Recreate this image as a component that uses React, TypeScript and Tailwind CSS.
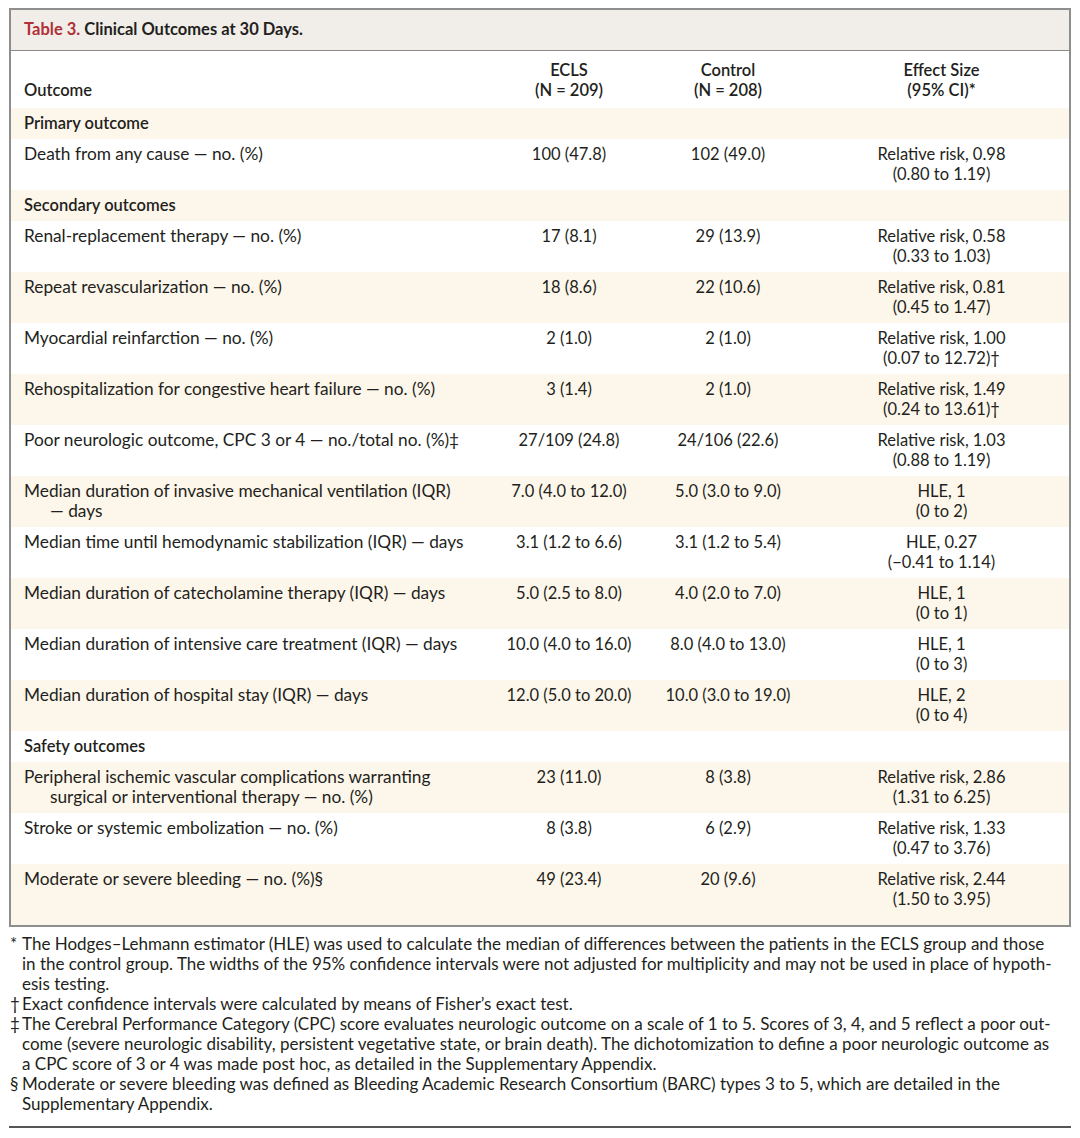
import React from "react";

type Row =
  | { kind: "section"; label: string; shade: boolean }
  | {
      kind: "data";
      label: string[];
      ecls: string;
      control: string;
      effect: string[];
      shade: boolean;
      last?: boolean;
    };

const rows: Row[] = [
  { kind: "section", label: "Primary outcome", shade: true },
  {
    kind: "data",
    label: ["Death from any cause — no. (%)"],
    ecls: "100 (47.8)",
    control: "102 (49.0)",
    effect: ["Relative risk, 0.98", "(0.80 to 1.19)"],
    shade: false,
  },
  { kind: "section", label: "Secondary outcomes", shade: true },
  {
    kind: "data",
    label: ["Renal-replacement therapy — no. (%)"],
    ecls: "17 (8.1)",
    control: "29 (13.9)",
    effect: ["Relative risk, 0.58", "(0.33 to 1.03)"],
    shade: false,
  },
  {
    kind: "data",
    label: ["Repeat revascularization — no. (%)"],
    ecls: "18 (8.6)",
    control: "22 (10.6)",
    effect: ["Relative risk, 0.81", "(0.45 to 1.47)"],
    shade: true,
  },
  {
    kind: "data",
    label: ["Myocardial reinfarction — no. (%)"],
    ecls: "2 (1.0)",
    control: "2 (1.0)",
    effect: ["Relative risk, 1.00", "(0.07 to 12.72)†"],
    shade: false,
  },
  {
    kind: "data",
    label: ["Rehospitalization for congestive heart failure — no. (%)"],
    ecls: "3 (1.4)",
    control: "2 (1.0)",
    effect: ["Relative risk, 1.49", "(0.24 to 13.61)†"],
    shade: true,
  },
  {
    kind: "data",
    label: ["Poor neurologic outcome, CPC 3 or 4 — no./total no. (%)‡"],
    ecls: "27/109 (24.8)",
    control: "24/106 (22.6)",
    effect: ["Relative risk, 1.03", "(0.88 to 1.19)"],
    shade: false,
  },
  {
    kind: "data",
    label: ["Median duration of invasive mechanical ventilation (IQR)", "— days"],
    ecls: "7.0 (4.0 to 12.0)",
    control: "5.0 (3.0 to 9.0)",
    effect: ["HLE, 1", "(0 to 2)"],
    shade: true,
  },
  {
    kind: "data",
    label: ["Median time until hemodynamic stabilization (IQR) — days"],
    ecls: "3.1 (1.2 to 6.6)",
    control: "3.1 (1.2 to 5.4)",
    effect: ["HLE, 0.27", "(−0.41 to 1.14)"],
    shade: false,
  },
  {
    kind: "data",
    label: ["Median duration of catecholamine therapy (IQR) — days"],
    ecls: "5.0 (2.5 to 8.0)",
    control: "4.0 (2.0 to 7.0)",
    effect: ["HLE, 1", "(0 to 1)"],
    shade: true,
  },
  {
    kind: "data",
    label: ["Median duration of intensive care treatment (IQR) — days"],
    ecls: "10.0 (4.0 to 16.0)",
    control: "8.0 (4.0 to 13.0)",
    effect: ["HLE, 1", "(0 to 3)"],
    shade: false,
  },
  {
    kind: "data",
    label: ["Median duration of hospital stay (IQR) — days"],
    ecls: "12.0 (5.0 to 20.0)",
    control: "10.0 (3.0 to 19.0)",
    effect: ["HLE, 2", "(0 to 4)"],
    shade: true,
  },
  { kind: "section", label: "Safety outcomes", shade: false },
  {
    kind: "data",
    label: [
      "Peripheral ischemic vascular complications warranting",
      "surgical or interventional therapy — no. (%)",
    ],
    ecls: "23 (11.0)",
    control: "8 (3.8)",
    effect: ["Relative risk, 2.86", "(1.31 to 6.25)"],
    shade: true,
  },
  {
    kind: "data",
    label: ["Stroke or systemic embolization — no. (%)"],
    ecls: "8 (3.8)",
    control: "6 (2.9)",
    effect: ["Relative risk, 1.33", "(0.47 to 3.76)"],
    shade: false,
  },
  {
    kind: "data",
    label: ["Moderate or severe bleeding — no. (%)§"],
    ecls: "49 (23.4)",
    control: "20 (9.6)",
    effect: ["Relative risk, 2.44", "(1.50 to 3.95)"],
    shade: true,
    last: true,
  },
];

const footnotes: { mark: string; lines: string[] }[] = [
  {
    mark: "*",
    lines: [
      "The Hodges–Lehmann estimator (HLE) was used to calculate the median of differences between the patients in the ECLS group and those",
      "in the control group. The widths of the 95% confidence intervals were not adjusted for multiplicity and may not be used in place of hypoth-",
      "esis testing.",
    ],
  },
  {
    mark: "†",
    lines: ["Exact confidence intervals were calculated by means of Fisher’s exact test."],
  },
  {
    mark: "‡",
    lines: [
      "The Cerebral Performance Category (CPC) score evaluates neurologic outcome on a scale of 1 to 5. Scores of 3, 4, and 5 reflect a poor out-",
      "come (severe neurologic disability, persistent vegetative state, or brain death). The dichotomization to define a poor neurologic outcome as",
      "a CPC score of 3 or 4 was made post hoc, as detailed in the Supplementary Appendix.",
    ],
  },
  {
    mark: "§",
    lines: [
      "Moderate or severe bleeding was defined as Bleeding Academic Research Consortium (BARC) types 3 to 5, which are detailed in the",
      "Supplementary Appendix.",
    ],
  },
];

function DataRow({ row }: { row: Extract<Row, { kind: "data" }> }) {
  const bg = row.shade ? "bg-[#fdf6ea]" : "bg-white";
  const pad = row.last ? "pt-[5px] pb-[16px]" : "pt-[5px] pb-[6px]";
  return (
    <>
      <div className={`${bg} ${pad} pl-[13px] text-[17.3px]`}>
        {row.label.map((l, i) => (
          <div key={i} className={i > 0 ? "pl-[26px] whitespace-nowrap" : "whitespace-nowrap"}>
            {l}
          </div>
        ))}
      </div>
      <div className={`${bg} ${pad} text-center`}>{row.ecls}</div>
      <div className={`${bg} ${pad} text-center`}>{row.control}</div>
      <div className={`${bg} ${pad} text-center`}>
        {row.effect.map((l, i) => (
          <div key={i}>{l}</div>
        ))}
      </div>
    </>
  );
}

export default function App() {
  return (
    <div className="bg-white min-h-[1138px] pt-[8px] px-[9px] font-['Lato','Liberation_Sans',sans-serif] text-[#231f20] text-[16.5px] leading-[20px]">
      <div className="border-2 border-[#8e8e8e]">
        <div className="bg-[#f1eee9] border-b border-[#8a8a8a] pl-[13px] pt-[9px] pb-[11px] font-bold">
          <span className="text-[#b12f36]">Table 3.</span> Clinical Outcomes at 30 Days.
        </div>
        <div className="grid grid-cols-[485px_146px_172px_255px]">
          <div className="pl-[13px] pt-[29px] pb-[8px] font-semibold">Outcome</div>
          <div className="pt-[9px] pb-[8px] text-center font-semibold">
            <div>ECLS</div>
            <div>(N = 209)</div>
          </div>
          <div className="pt-[9px] pb-[8px] text-center font-semibold">
            <div>Control</div>
            <div>(N = 208)</div>
          </div>
          <div className="pt-[9px] pb-[8px] text-center font-semibold">
            <div>Effect Size</div>
            <div>(95% CI)*</div>
          </div>
          {rows.map((row, i) =>
            row.kind === "section" ? (
              <div
                key={i}
                className={`col-span-4 pl-[13px] pt-[5px] pb-[6px] font-semibold ${
                  row.shade ? "bg-[#fdf6ea]" : "bg-white"
                }`}
              >
                {row.label}
              </div>
            ) : (
              <DataRow key={i} row={row} />
            )
          )}
        </div>
      </div>
      <div className="mt-[7px] text-[17px] leading-[20px] text-[#231f20]">
        {footnotes.map((f, i) => (
          <div key={i} className="flex">
            <span className="w-[13px] shrink-0 pl-[1px]">{f.mark}</span>
            <div>
              {f.lines.map((l, j) => (
                <div key={j} className="whitespace-nowrap">
                  {l}
                </div>
              ))}
            </div>
          </div>
        ))}
      </div>
      <div className="mt-[12px] h-[2px] bg-[#555555]" />
    </div>
  );
}
